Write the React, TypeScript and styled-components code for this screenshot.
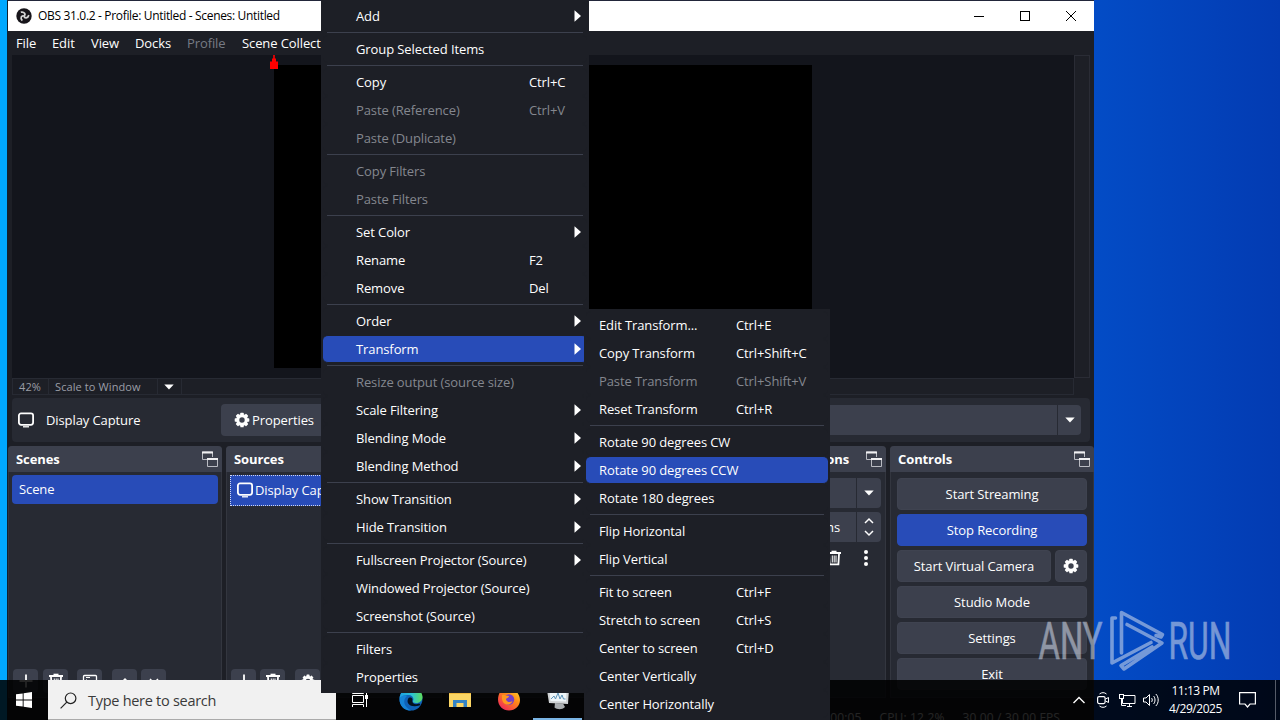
import React from "react";
import styled, { createGlobalStyle, css } from "styled-components";

const Global = createGlobalStyle`
  * { box-sizing: border-box; }
  body { margin: 0; background: #0347c0; overflow: hidden; }
  button { font: inherit; color: inherit; letter-spacing: inherit; border: 0; padding: 0; }
`;

const Desktop = styled.div`
  position: relative;
  width: 1280px;
  height: 720px;
  overflow: hidden;
  font-family: "Open Sans", "Noto Sans", sans-serif;
  font-size: 13px;
  line-height: 18px;
  letter-spacing: -0.1px;
  color: #fefefe;
  white-space: nowrap;
  background: linear-gradient(90deg, #00a8ff 0, #00a8ff 8px, #034cc6 1094px, #033bb2 1280px);
`;

/* ---------- OBS window ---------- */
const Window = styled.div`
  position: absolute;
  left: 7px;
  top: 0;
  width: 1087px;
  height: 732px;
  display: flex;
  flex-direction: column;
  background: #1d1f26;
  border-left: 1px solid #10212f;
  border-top: 1px solid #22263a;
`;
const TitleBar = styled.div`
  height: 30px;
  flex: none;
  display: flex;
  align-items: center;
  background: #fff;
  color: #000;
  padding-left: 8px;
`;
const TitleText = styled.span`
  margin-left: 6px;
  flex: 1;
  font-size: 12px;
  letter-spacing: -0.33px;
`;
const CaptionButton = styled.button`
  width: 46px;
  height: 30px;
  display: flex;
  align-items: center;
  justify-content: center;
  background: none;
`;
const MenuBar = styled.div`
  height: 24px;
  flex: none;
  display: flex;
  align-items: center;
  gap: 16px;
  padding-left: 8px;
`;
const MenuBarItem = styled.span<{ $dim?: boolean; $w: number }>`
  width: ${(p) => p.$w}px;
  color: ${(p) => (p.$dim ? "#777b85" : "#fefefe")};
`;
const PreviewRow = styled.div`
  height: 323px;
  flex: none;
  display: flex;
  margin: 0 4px;
`;
const Preview = styled.div`
  width: 1062px;
  background: #13151c;
  padding: 10px 0 0 262px;
`;
const Canvas = styled.div`
  position: relative;
  width: 538px;
  height: 303px;
  background: #000;
`;
const RotateHandle = styled.svg`
  position: absolute;
  left: -5px;
  top: -10px;
`;
const VScroll = styled.div`
  width: 16px;
  border: 1px solid #2a2c35;
  background: #1d1f26;
`;
const ScaleRow = styled.div`
  height: 17px;
  flex: none;
  display: flex;
  align-items: center;
  margin: 0 20px 0 4px;
  border: 1px solid #272a33;
  font-size: 11px;
  letter-spacing: 0.1px;
  line-height: 15px;
  color: #9b9ea6;
`;
const ScaleCell = styled.span<{ $w: number }>`
  width: ${(p) => p.$w}px;
  height: 15px;
  display: flex;
  align-items: center;
  padding-left: 6px;
  border-right: 1px solid #272a33;
`;
const ContextBar = styled.div`
  height: 44px;
  flex: none;
  display: flex;
  align-items: center;
  margin: 3px 4px 4px;
  padding: 0 9px 0 6px;
  background: #272a33;
  border-radius: 4px;
`;
const SourceName = styled.span`
  margin-left: 12px;
  width: 175px;
`;
const PropertiesButton = styled.button`
  width: 108px;
  height: 32px;
  display: flex;
  align-items: center;
  gap: 2px;
  padding-left: 13px;
  border-radius: 4px;
  background: #3c404d;
`;
const Combo = styled.div<{ $h: number; $cell: number }>`
  flex: 1;
  height: ${(p) => p.$h}px;
  margin-left: 6px;
  display: flex;
  justify-content: flex-end;
  background: #3c404d;
  border-radius: 4px;
  & > span {
    width: ${(p) => p.$cell}px;
    display: flex;
    align-items: center;
    justify-content: center;
    border-left: 1px solid #272a33;
  }
`;
const Docks = styled.div`
  height: 252px;
  flex: none;
  display: flex;
  gap: 4px;
`;
const Dock = styled.section<{ $w: number }>`
  width: ${(p) => p.$w}px;
  display: flex;
  flex-direction: column;
  background: #272a33;
  border: 1px solid #33363f;
  border-top: 0;
  border-radius: 4px 4px 0 0;
`;
const DockHeader = styled.header`
  height: 26px;
  margin: 0 -1px;
  flex: none;
  display: flex;
  align-items: center;
  justify-content: space-between;
  padding: 0 4px 0 8px;
  background: #3c404d;
  border-radius: 4px 4px 0 0;
  font-weight: 700;
`;
const TransitionTitle = styled.span`
  margin-left: auto;
  margin-right: 17px;
`;
const DockBody = styled.div`
  flex: 1;
  padding: 3px 3px 0;
`;
const ListItem = styled.div<{ $focus?: boolean }>`
  height: ${(p) => (p.$focus ? 31 : 29)}px;
  display: flex;
  align-items: center;
  gap: 2px;
  padding: 0 0 2px 7px;
  border-radius: 4px;
  background: #284cb8;
  ${(p) =>
    p.$focus &&
    css`
      border-radius: 0;
      border: 1px dotted #cdd6f2;
      padding-left: 6px;
    `}
`;
const DockTools = styled.div`
  height: 28px;
  flex: none;
  display: flex;
  padding-left: 4px;
`;
const ToolButton = styled.button<{ $gap?: number }>`
  width: 25px;
  height: 24px;
  margin-right: ${(p) => p.$gap ?? 5}px;
  display: flex;
  align-items: center;
  justify-content: center;
  border-radius: 4px;
  background: #3c404d;
`;
const TransitionBody = styled.div`
  flex: 1;
  display: flex;
  flex-direction: column;
  gap: 4px;
  padding: 6px 4px 0 0;
`;
const SpinBox = styled.div`
  height: 30px;
  margin-left: 6px;
  display: flex;
  align-items: center;
  justify-content: flex-end;
  background: #3c404d;
  border-radius: 4px;
`;
const SpinArrows = styled.div`
  width: 25px;
  height: 30px;
  margin-left: 16px;
  display: flex;
  flex-direction: column;
  align-items: center;
  justify-content: space-evenly;
  border-left: 1px solid #272a33;
`;
const TransitionTools = styled.div`
  display: flex;
  justify-content: flex-end;
  align-items: center;
  gap: 16px;
  height: 24px;
  padding-right: 7px;
`;
const ControlsBody = styled.div`
  flex: 1;
  display: flex;
  flex-direction: column;
  gap: 4px;
  padding: 6px 6px 0;
`;
const ControlRow = styled.div`
  display: flex;
  gap: 4px;
`;
const ControlButton = styled.button<{ $active?: boolean; $w?: number }>`
  width: ${(p) => p.$w ?? 190}px;
  height: 32px;
  display: flex;
  align-items: center;
  justify-content: center;
  border-radius: 4px;
  border: 1px solid ${(p) => (p.$active ? "#284cb8" : "#3f4350")};
  background: ${(p) => (p.$active ? "#284cb8" : "#3c404d")};
`;
const StatusBar = styled.footer`
  flex: 1;
  display: flex;
  align-items: center;
  justify-content: flex-end;
  gap: 18px;
  padding: 6px 34px 0 0;
  font-size: 12px;
  letter-spacing: 0.15px;
`;

/* ---------- Taskbar ---------- */
const Taskbar = styled.div`
  position: absolute;
  left: 0;
  bottom: 0;
  width: 1280px;
  height: 40px;
  display: flex;
  align-items: center;
  background: rgba(0, 0, 0, 0.86);
`;
const StartButton = styled.div`
  width: 48px;
  display: flex;
  justify-content: center;
`;
const SearchBox = styled.div`
  width: 288px;
  height: 40px;
  display: flex;
  align-items: center;
  gap: 11px;
  padding: 2px 0 0 12px;
  background: #f1f1f1;
  border-bottom: 1px solid #aaa;
  color: #3a3a3a;
  font-size: 14.5px;
  letter-spacing: -0.28px;
`;
const TaskIcon = styled.div<{ $active?: boolean; $w?: number }>`
  width: ${(p) => p.$w ?? 49}px;
  height: 40px;
  display: flex;
  align-items: center;
  justify-content: center;
  border-bottom: 2px solid ${(p) => (p.$active ? "#7ab4e4" : "transparent")};
`;
const Tray = styled.div`
  margin-left: auto;
  display: flex;
  align-items: center;
  height: 40px;
`;
const TrayIcon = styled.span<{ $w: number }>`
  width: ${(p) => p.$w}px;
  display: flex;
  justify-content: center;
`;
const Clock = styled.div`
  width: 65px;
  text-align: center;
  font-size: 12px;
  letter-spacing: -0.45px;
  line-height: 18px;
`;
const ShowDesktop = styled.span`
  width: 5px;
  height: 40px;
  border-left: 1px solid #555b68;
`;

/* ---------- Context menus ---------- */
const Popup = styled.div<{ $x: number; $y: number; $w: number; $h: number }>`
  position: absolute;
  left: ${(p) => p.$x}px;
  top: ${(p) => p.$y}px;
  width: ${(p) => p.$w}px;
  height: ${(p) => p.$h}px;
  padding: 2px 2px 0;
  background: #1d1f26;
`;
const MenuRow = styled.div<{ $on?: boolean; $dim?: boolean; $cols: string }>`
  height: 28px;
  display: grid;
  grid-template-columns: ${(p) => p.$cols};
  align-items: center;
  border-radius: 5px;
  border: 1px solid #1d1f26;
  border-width: 1px 0;
  background: ${(p) => (p.$on ? "#284cb8" : "transparent")};
  color: ${(p) => (p.$dim ? "#84878f" : "#fefefe")};
  & > :first-child { grid-column: 2; }
  & > svg { grid-column: 4; }
`;
const Separator = styled.div`
  height: 5px;
  padding: 2px 4px;
  &::after { content: ""; display: block; height: 1px; background: #3c404d; }
`;

const Watermark = styled.svg`
  position: absolute;
  left: 1036px;
  top: 606px;
  opacity: 0.55;
`;

type Item = { t: string; k?: string; dim?: boolean; sub?: boolean; on?: boolean } | null;

const sourceMenu: Item[] = [
  { t: "Add", sub: true }, null,
  { t: "Group Selected Items" }, null,
  { t: "Copy", k: "Ctrl+C" },
  { t: "Paste (Reference)", k: "Ctrl+V", dim: true },
  { t: "Paste (Duplicate)", dim: true }, null,
  { t: "Copy Filters", dim: true },
  { t: "Paste Filters", dim: true }, null,
  { t: "Set Color", sub: true },
  { t: "Rename", k: "F2" },
  { t: "Remove", k: "Del" }, null,
  { t: "Order", sub: true },
  { t: "Transform", sub: true, on: true }, null,
  { t: "Resize output (source size)", dim: true },
  { t: "Scale Filtering", sub: true },
  { t: "Blending Mode", sub: true },
  { t: "Blending Method", sub: true }, null,
  { t: "Show Transition", sub: true },
  { t: "Hide Transition", sub: true }, null,
  { t: "Fullscreen Projector (Source)", sub: true },
  { t: "Windowed Projector (Source)" },
  { t: "Screenshot (Source)" }, null,
  { t: "Filters" },
  { t: "Properties" },
];
const transformMenu: Item[] = [
  { t: "Edit Transform...", k: "Ctrl+E" },
  { t: "Copy Transform", k: "Ctrl+Shift+C" },
  { t: "Paste Transform", k: "Ctrl+Shift+V", dim: true },
  { t: "Reset Transform", k: "Ctrl+R" }, null,
  { t: "Rotate 90 degrees CW" },
  { t: "Rotate 90 degrees CCW", on: true },
  { t: "Rotate 180 degrees" }, null,
  { t: "Flip Horizontal" },
  { t: "Flip Vertical" }, null,
  { t: "Fit to screen", k: "Ctrl+F" },
  { t: "Stretch to screen", k: "Ctrl+S" },
  { t: "Center to screen", k: "Ctrl+D" },
  { t: "Center Vertically" },
  { t: "Center Horizontally" },
];

const MenuItems = ({ items, cols }: { items: Item[]; cols: string }) => (
  <>
    {items.map((it, i) =>
      it ? (
        <MenuRow key={i} $on={it.on} $dim={it.dim} $cols={cols}>
          <span>{it.t}</span>
          {it.k && <span>{it.k}</span>}
          {it.sub && (
            <svg width="8" height="12"><path d="M0.5 0.2L7 6L0.5 11.8Z" fill="#fff" /></svg>
          )}
        </MenuRow>
      ) : (
        <Separator key={i} />
      )
    )}
  </>
);

/* ---------- Icons ---------- */
const Gear = ({ s = 16 }: { s?: number }) => (
  <svg width={s} height={s} viewBox="0 0 16 16">
    <circle cx="8" cy="8" r="4.3" fill="none" stroke="#fefefe" strokeWidth="3.2" />
    {[0, 45, 90, 135, 180, 225, 270, 315].map((a) => (
      <rect key={a} x="6.3" y="0.7" width="3.4" height="2.6" rx="0.6" fill="#fefefe" transform={`rotate(${a} 8 8)`} />
    ))}
  </svg>
);
const Monitor = () => (
  <svg width="16" height="16" viewBox="0 0 16 16">
    <rect x="0.9" y="1.4" width="14.2" height="11.4" rx="2.2" fill="none" stroke="#fefefe" strokeWidth="1.8" />
    <path d="M5 14.8H11" stroke="#fefefe" strokeWidth="1.3" />
  </svg>
);
const Popout = () => (
  <svg width="16" height="17" viewBox="0 0 16 17" fill="none" stroke="#b9bbc2">
    <path d="M5 8.5H0.5V1H10.5V6" />
    <path d="M0 1.5H11" strokeWidth="2" stroke="#f0f0f2" />
    <path d="M5.5 8V15.5H15.5V8" />
    <path d="M5 8H16" strokeWidth="2" stroke="#f0f0f2" />
  </svg>
);
const Trash = () => (
  <svg width="16" height="16" viewBox="0 0 16 16" fill="none" stroke="#fefefe">
    <path d="M1 3H15" strokeWidth="2" />
    <path d="M5.5 1.5H10.5" strokeWidth="1.6" />
    <path d="M3 4L3.6 14.4H12.4L13 4" strokeWidth="1.8" />
    <path d="M6.3 5.5V12.5M8.2 5.5V12.5M10 5.5V12.5" />
  </svg>
);
const Plus = () => (
  <svg width="16" height="16"><path d="M8 1.5V14.5M1.5 8H14.5" stroke="#fefefe" strokeWidth="1.8" /></svg>
);
const FilterIcon = () => (
  <svg width="16" height="16" fill="none" stroke="#fefefe">
    <rect x="1.5" y="2.5" width="13" height="11" rx="1" strokeWidth="1.3" />
    <path d="M4 4.5H8M4 6.5L11 12" />
  </svg>
);
const Chevron = ({ up, w = 16, h = 16 }: { up?: boolean; w?: number; h?: number }) => (
  <svg width={w} height={h} viewBox={`0 0 ${w} ${h}`}>
    <path
      d={up ? `M${w / 2 - 4} ${h / 2 + 2}L${w / 2} ${h / 2 - 2}L${w / 2 + 4} ${h / 2 + 2}` : `M${w / 2 - 4} ${h / 2 - 2}L${w / 2} ${h / 2 + 2}L${w / 2 + 4} ${h / 2 - 2}`}
      fill="none" stroke="#fefefe" strokeWidth="1.5"
    />
  </svg>
);
const Caret = () => (
  <svg width="10" height="6"><path d="M0.3 0.4H9.7L5 5.4Z" fill="#fefefe" /></svg>
);
const ObsLogo = () => (
  <svg width="16" height="16" viewBox="0 0 16 16">
    <circle cx="8" cy="8" r="7.7" fill="#17151a" />
    <g fill="none" stroke="#d4d4d4" strokeWidth="1.7">
      {[0, 120, 240].map((a) => (
        <path key={a} d="M8 8C10 6.400 8.500 3.400 4.800 4.200" transform={`rotate(${a} 8 8)`} />
      ))}
    </g>
  </svg>
);

export default function App() {
  return (
    <Desktop>
      <Global />
      <Window>
        <TitleBar>
          <ObsLogo />
          <TitleText>OBS 31.0.2 - Profile: Untitled - Scenes: Untitled</TitleText>
          <CaptionButton><svg width="10" height="10"><path d="M0 5.5H10" stroke="#000" /></svg></CaptionButton>
          <CaptionButton><svg width="10" height="10"><rect x="0.5" y="0.5" width="9" height="9" fill="none" stroke="#000" /></svg></CaptionButton>
          <CaptionButton><svg width="10" height="10"><path d="M0 0L10 10M10 0L0 10" stroke="#000" /></svg></CaptionButton>
        </TitleBar>
        <MenuBar>
          <MenuBarItem $w={20}>File</MenuBarItem>
          <MenuBarItem $w={23}>Edit</MenuBarItem>
          <MenuBarItem $w={28}>View</MenuBarItem>
          <MenuBarItem $w={36}>Docks</MenuBarItem>
          <MenuBarItem $w={39} $dim>Profile</MenuBarItem>
          <MenuBarItem $w={100}>Scene Collection</MenuBarItem>
        </MenuBar>
        <PreviewRow>
          <Preview>
            <Canvas>
              <RotateHandle width="10" height="14"><path d="M1 14V6.500H3V3.500H4.200V0H5.800V3.500H7V6.500H9V14Z" fill="#f00" /></RotateHandle>
            </Canvas>
          </Preview>
          <VScroll />
        </PreviewRow>
        <ScaleRow>
          <ScaleCell $w={36}>42%</ScaleCell>
          <ScaleCell $w={109}>Scale to Window</ScaleCell>
          <ScaleCell $w={24}><Caret /></ScaleCell>
        </ScaleRow>
        <ContextBar>
          <Monitor />
          <SourceName>Display Capture</SourceName>
          <PropertiesButton><Gear />Properties</PropertiesButton>
          <Combo $h={30} $cell={24}><span><Caret /></span></Combo>
        </ContextBar>
        <Docks>
          <Dock $w={214}>
            <DockHeader>Scenes<Popout /></DockHeader>
            <DockBody><ListItem>Scene</ListItem></DockBody>
            <DockTools>
              <ToolButton><Plus /></ToolButton>
              <ToolButton $gap={9}><Trash /></ToolButton>
              <ToolButton $gap={10}><FilterIcon /></ToolButton>
              <ToolButton $gap={4}><Chevron up /></ToolButton>
              <ToolButton><Chevron /></ToolButton>
            </DockTools>
          </Dock>
          <Dock $w={216}>
            <DockHeader>Sources<Popout /></DockHeader>
            <DockBody><ListItem $focus><Monitor />Display Capture</ListItem></DockBody>
            <DockTools>
              <ToolButton $gap={4}><Plus /></ToolButton>
              <ToolButton $gap={10}><Trash /></ToolButton>
              <ToolButton><Gear s={14} /></ToolButton>
            </DockTools>
          </Dock>
          <Dock $w={275}><DockHeader>Audio Mixer</DockHeader></Dock>
          <Dock $w={161}>
            <DockHeader><TransitionTitle>Scene Transitions</TransitionTitle><Popout /></DockHeader>
            <TransitionBody>
              <ControlRow><Combo $h={30} $cell={25}><span><Caret /></span></Combo></ControlRow>
              <SpinBox>
                300 ms
                <SpinArrows><Chevron up w={10} h={8} /><Chevron w={10} h={8} /></SpinArrows>
              </SpinBox>
              <TransitionTools>
                <Trash />
                <svg width="16" height="16"><g fill="#fefefe"><circle cx="8" cy="2" r="2" /><circle cx="8" cy="8" r="2" /><circle cx="8" cy="14" r="2" /></g></svg>
              </TransitionTools>
            </TransitionBody>
          </Dock>
          <Dock $w={204}>
            <DockHeader>Controls<Popout /></DockHeader>
            <ControlsBody>
              <ControlButton>Start Streaming</ControlButton>
              <ControlButton $active>Stop Recording</ControlButton>
              <ControlRow>
                <ControlButton $w={154}>Start Virtual Camera</ControlButton>
                <ControlButton $w={32}><Gear /></ControlButton>
              </ControlRow>
              <ControlButton>Studio Mode</ControlButton>
              <ControlButton>Settings</ControlButton>
              <ControlButton>Exit</ControlButton>
            </ControlsBody>
          </Dock>
        </Docks>
        <StatusBar>
          <span>00:00:05</span>
          <span>CPU: 12.2%</span>
          <span>30.00 / 30.00 FPS</span>
        </StatusBar>
      </Window>

      <Taskbar>
        <StartButton>
          <svg width="16" height="16" fill="#fff"><path d="M0 2.3L6.7 1.4V7.5H0ZM7.6 1.2L16 0V7.5H7.6ZM0 8.4H6.7V14.6L0 13.7ZM7.6 8.4H16V16L7.6 14.8Z" /></svg>
        </StartButton>
        <SearchBox>
          <svg width="17" height="17" fill="none" stroke="#222" strokeWidth="1.2"><circle cx="10.6" cy="6.3" r="5.3" /><path d="M6.8 10.2L0.6 16.4" /></svg>
          Type here to search
        </SearchBox>
        <TaskIcon $w={50}>
          <svg width="18" height="16" fill="none" stroke="#fff"><path d="M0.5 0V2.5H11.5V0M0.5 4.5H11.5V11.5H0.5ZM0.5 16V13.5H11.5V16M14.5 0V4M14.5 8V16" /><rect x="13.5" y="4.5" width="2" height="3" fill="#fff" /></svg>
        </TaskIcon>
        <TaskIcon>
          <svg width="24" height="24" viewBox="0 0 24 24">
            <defs>
              <linearGradient id="eg" x1="0" x2="1"><stop offset="0" stopColor="#1b9de2" /><stop offset="0.55" stopColor="#2cc3d2" /><stop offset="1" stopColor="#5fdc5a" /></linearGradient>
            </defs>
            <circle cx="12" cy="12" r="11.5" fill="#0f62b8" />
            <path d="M0.5 12C1 4 7 0.5 12 0.5C19 0.5 23.5 5 23.5 10C23.5 14 20 16 17 16C14.5 16 13.5 15 14 14C15 12.500 14.500 8.500 10 8C6 7.600 2 9 0.500 12Z" fill="url(#eg)" />
            <path d="M9 12C7 17 12 21 20.500 18.500C22 17.500 21 16.500 20 16.500C15 18.500 12.500 15.500 13.500 12.500C13 10 10 10 9 12Z" fill="#04111f" />
            <path d="M8 9C3 13 5 20 12 23.500C5 24 0 18 0.600 12C2 8.500 6 7.500 8 9Z" fill="#1583d6" />
          </svg>
        </TaskIcon>
        <TaskIcon>
          <svg width="22" height="20" viewBox="0 0 22 20">
            <path d="M0 1H8L10 3H22V18H0Z" fill="#f0b93c" />
            <path d="M0 5H22V18H0Z" fill="#fbd665" />
            <path d="M4 18V11H18V18H14.500V14H7.500V18Z" fill="#3484c6" />
          </svg>
        </TaskIcon>
        <TaskIcon>
          <svg width="24" height="24" viewBox="0 0 24 24">
            <defs>
              <linearGradient id="fx" x1="1" y1="0" x2="0.2" y2="1"><stop offset="0" stopColor="#ffe13a" /><stop offset="0.45" stopColor="#ff8a16" /><stop offset="1" stopColor="#f0245c" /></linearGradient>
            </defs>
            <path d="M3 5L5 6C6 4 7 3 9 2.500L9.500 4.500L13 1C18 2 23 7 23 13C23 19 18 23.500 12 23.500C6 23.500 1 19 1 12.500C1 9 2 7 3 5Z" fill="url(#fx)" />
            <circle cx="12" cy="12.500" r="5.200" fill="#7440c8" />
            <path d="M5 8C8 7 9 9 12 9C12 11 9 11 9 12.500C9.500 15 13 16 15.500 14C14 19 6 19 5 12Z" fill="#ff9820" />
          </svg>
        </TaskIcon>
        <TaskIcon $active>
          <svg width="24" height="22" viewBox="0 0 24 22">
            <path d="M1 2L23 1L22 16L3 15Z" fill="#cfd2d4" />
            <path d="M3.500 3.500L20.500 3L20 13.500L4.500 13Z" fill="#eef5f8" />
            <path d="M5 11L8 8L9.500 11L12 5L14 11L16 7L17.500 11H19.500" fill="none" stroke="#5c93b8" />
            <path d="M9 15L17 15.500L19 19C16 22 11 21.500 8.500 19.500Z" fill="#a9adb0" />
          </svg>
        </TaskIcon>
        <Tray>
          <TrayIcon $w={24}><svg width="12" height="8" fill="none" stroke="#fff" strokeWidth="1.4"><path d="M0.500 7L6 1.500L11.500 7" /></svg></TrayIcon>
          <TrayIcon $w={24}>
            <svg width="14" height="16" fill="none" stroke="#fff"><path d="M3.500 2C5.500 0.200 8.500 0.200 10.500 2M3.500 14C5.500 15.800 8.500 15.800 10.500 14" /><rect x="1.600" y="4.600" width="7.500" height="7" rx="1.500" strokeWidth="1.200" /><path d="M9.500 7L12.500 5.500V10.500L9.500 9" /></svg>
          </TrayIcon>
          <TrayIcon $w={24}>
            <svg width="17" height="14" fill="none" stroke="#fff"><path d="M5 2.500H16V10.500H3.500V6M8 13.500H13M10.500 10.500V13.500" /><rect x="0.500" y="1.500" width="4" height="4" /><path d="M2.500 5.500V12.500H7" /></svg>
          </TrayIcon>
          <TrayIcon $w={24}>
            <svg width="17" height="14" fill="none" stroke="#fff"><path d="M0.500 5V9H3L6.500 12.500V1.500L3 5Z" /><path d="M8.500 5C9.500 6 9.500 8 8.500 9M10.500 3C12.500 5 12.500 9 10.500 11M12.800 1C16 4 16 10 12.800 13" /></svg>
          </TrayIcon>
          <Clock>11:13 PM<br />4/29/2025</Clock>
          <TrayIcon $w={38}><svg width="17" height="16" fill="none" stroke="#fff" strokeWidth="1.200"><path d="M0.600 0.600H16.400V12H11L8.500 15L6 12H0.600Z" /></svg></TrayIcon>
          <TrayIcon $w={9} />
          <ShowDesktop />
        </Tray>
      </Taskbar>

      <Popup $x={321} $y={0} $w={268} $h={693}>
        <MenuItems items={sourceMenu} cols="33px 173px 45px 13px" />
      </Popup>
      <Popup $x={584} $y={309} $w={246} $h={420}>
        <MenuItems items={transformMenu} cols="13px 137px 1fr 8px" />
      </Popup>

      <Watermark width="200" height="70" viewBox="1036 606 200 70">
        <g fill="#d3dcec" stroke="#d3dcec" strokeWidth="0.600" fontFamily="Roboto, sans-serif" fontSize="51" letterSpacing="0">
          <text x="1038.500" y="659" textLength="64" lengthAdjust="spacingAndGlyphs">ANY</text>
          <text x="1168.500" y="659" textLength="63" lengthAdjust="spacingAndGlyphs">RUN</text>
        </g>
        <g fill="none" stroke="#d3dcec" strokeWidth="3.600" strokeLinejoin="round" strokeLinecap="round">
          <path d="M1115.500 618H1112V663L1151 642.500" />
          <path d="M1121.500 653V612.500L1162.500 634.500L1161 637L1156 635.500" />
          <path d="M1127 624.500L1162 643L1124 669L1121 665.500L1152 647" />
        </g>
      </Watermark>
    </Desktop>
  );
}
